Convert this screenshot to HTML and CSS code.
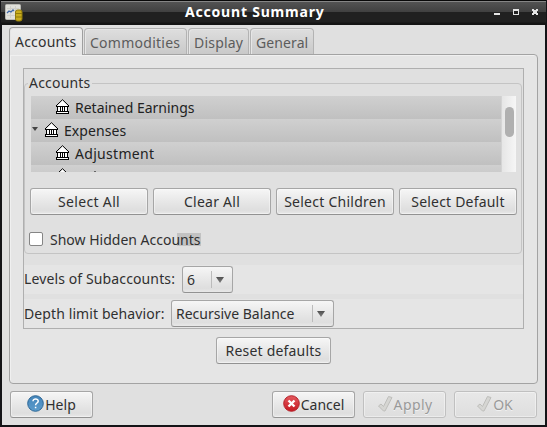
FILE: index.html
```html
<!DOCTYPE html>
<html lang="en">
<head>
<meta charset="utf-8">
<title>Account Summary</title>
<link rel="stylesheet" href="styles.css">
</head>
<body>
<svg class="defs" width="0" height="0">
  <defs>
    <symbol id="bank" viewBox="0 0 13 15">
      <path d="M6.500 1L12 6.500V8H1V6.500Z" fill="#fff"/>
      <path d="M.5 6.500L6.500 .7 12.500 6.500" fill="none" stroke="#000"/>
      <path d="M0 6h1v1h11V6h1v2H0zM1 8h11v4H1zM0 12h13v3H0z" fill="#000" shape-rendering="crispEdges"/>
      <path d="M2 8h2v4H2zM5 8h1v4H5zM7 8h1v4H7zM9 8h2v4H9zM1 13h11v1H1z" fill="#fff" shape-rendering="crispEdges"/>
    </symbol>
    <symbol id="check" viewBox="0 0 16 18">
      <path d="M1.500 11L4 9l2.500 2.500L11.500 1.500 15 2.500 8 16H6.500Z" fill="#d6d6d3" stroke="#bebebb" stroke-linejoin="round"/>
    </symbol>
    <linearGradient id="blue" x2="0" y2="1"><stop stop-color="#4585ba"/><stop offset="1" stop-color="#5b9ccc"/></linearGradient>
    <linearGradient id="red" x2="0" y2="1"><stop stop-color="#e45a5f"/><stop offset="1" stop-color="#c51820"/></linearGradient>
  </defs>
</svg>
<div class="window">
  <header class="titlebar">
    <svg class="app-icon" width="18" height="18" viewBox="0 0 18 18">
      <rect x=".5" y=".5" width="15" height="15" rx="1" fill="#e0e0db" stroke="#b9b9b4"/>
      <path d="M2 4.500h12M2 11.500h12M5.500 2v12M10.500 2v12" stroke="#cfcfca"/>
      <path d="M2 9l2-2 2 1 2-2 1 1" fill="none" stroke="#3f68a8" stroke-width="1.300"/>
      <rect x="10.500" y="6" width="6.500" height="11" rx="2" fill="#c8ac1c" stroke="#8f7a0b"/>
      <path d="M11 9.500h6M11 13h6" stroke="#8f7a0b"/>
    </svg>
    <h1 class="title">Account Summary</h1>
    <svg class="controls" width="45" height="8" viewBox="0 0 45 8" shape-rendering="crispEdges">
      <path d="M0 4h6v2H0zM19 0h6v6h-6zM38 0h2v1h2V0h2v2h-1v2h1v2h-2V5h-2v1h-2V4h1V2h-1z" fill="#e4e4e4"/>
      <path d="M20 2h4v3h-4z" fill="#222"/>
    </svg>
  </header>
  <main class="client">
    <nav class="tabs">
      <span class="tab active">Accounts</span><span class="tab commodities">Commodities</span><span class="tab display">Display</span><span class="tab general">General</span>
    </nav>
    <section class="page">
      <div class="options">
        <fieldset class="group">
          <legend>Accounts</legend>
          <div class="tree">
            <div class="rows">
              <div class="row child"><svg width="13" height="15"><use href="#bank"/></svg><span class="t-retained">Retained Earnings</span></div>
              <div class="row"><i class="expander"></i><svg width="13" height="15"><use href="#bank"/></svg><span class="t-expenses">Expenses</span></div>
              <div class="row child"><svg width="13" height="15"><use href="#bank"/></svg><span class="t-adjust">Adjustment</span></div>
              <div class="row child"><svg width="13" height="15"><use href="#bank"/></svg><i class="stem"></i></div>
            </div>
            <div class="scrollbar"><div class="thumb"></div></div>
          </div>
          <div class="selectors">
            <button class="btn b-all">Select All</button>
            <button class="btn b-clear">Clear All</button>
            <button class="btn b-children">Select Children</button>
            <button class="btn b-default">Select Default</button>
          </div>
          <label class="hidden-option"><i class="checkbox"></i><span class="t-hidden">Show Hidden Accounts</span></label>
        </fieldset>
        <div class="field levels"><span class="t-levels">Levels of Subaccounts:</span><span class="combo c-levels"><span>6</span><i class="arrow"></i></span></div>
        <div class="field depth"><span class="t-depth">Depth limit behavior:</span><span class="combo c-depth"><span>Recursive Balance</span><i class="arrow"></i></span></div>
      </div>
      <button class="btn b-reset">Reset defaults</button>
    </section>
    <footer class="actions">
      <button class="btn b-help"><svg width="17" height="17" viewBox="0 0 17 17"><circle cx="8.500" cy="8.500" r="7.800" fill="url(#blue)" stroke="#2d6796"/><path d="M6 6.300C6 3 11.300 3.200 11.200 6.200 11.100 8.100 8.600 8 8.600 10.300M8.600 11.700v1.600" fill="none" stroke="#fff" stroke-width="1.500"/></svg><span>Help</span></button>
      <button class="btn b-cancel"><svg width="17" height="17" viewBox="0 0 17 17"><circle cx="8.500" cy="8.500" r="7.800" fill="url(#red)" stroke="#b5222a"/><path d="M5.500 5.500l6 6M11.500 5.500l-6 6" stroke="#fff" stroke-width="2.400"/></svg><span>Cancel</span></button>
      <button class="btn b-apply" disabled><svg width="16" height="18"><use href="#check"/></svg><span>Apply</span></button>
      <button class="btn b-ok" disabled><svg width="16" height="18"><use href="#check"/></svg><span>OK</span></button>
    </footer>
  </main>
</div>
</body>
</html>
```
FILE: styles.css
```css
* { box-sizing: border-box; }
body {
  margin: 0;
  font: 14px/20px "Noto Sans", "Open Sans", sans-serif;
  color: #303030;
  overflow: hidden;
}
.defs { position: absolute; }
svg { display: block; flex: none; }
.window {
  width: 547px;
  height: 427px;
  padding: 0 2px 2px;
  background: #141417;
}
.titlebar {
  display: flex;
  height: 25px;
  margin: 0 -1px;
  border-top: 1px solid #080808;
  background: linear-gradient(#858585 0 1px, #535353 1px, #404040 11px, #202020 11px, #202020 21px, #141414 22px);
}
.app-icon { margin: 3px 0 0 4px; }
.title {
  margin: 1px 0 0 162px;
  width: 141px;
  font-size: 14px;
  line-height: 20px;
  font-weight: 700;
  letter-spacing: .8px;
  white-space: nowrap;
  color: #fff;
}
.controls { margin: 8px 0 0 168px; }
.client {
  height: 400px;
  padding: 2px 7px 0;
  background: #e0e0e0;
}
.tabs {
  display: flex;
  align-items: flex-end;
  gap: 1px;
  height: 28px;
  position: relative;
  margin-bottom: -1px;
}
.tab {
  height: 26px;
  margin-bottom: 1px;
  padding: 4px 0 0 5px;
  border: 1px solid #b3b3b3;
  border-bottom: 0;
  border-radius: 4px 4px 0 0;
  background: linear-gradient(#dedede, #c9c9c9);
  box-shadow: inset 1px 1px #e6e6e6;
  color: #5c5c5c;
  white-space: nowrap;
}
.tab.active {
  width: 74px;
  height: 28px;
  margin-bottom: 0;
  border-color: #9f9f9f;
  background: linear-gradient(#ededed, #e5e5e5);
  color: #303030;
  letter-spacing: .2px;
}
.commodities { width: 103px; letter-spacing: .26px; }
.display { width: 61px; letter-spacing: .2px; }
.general { width: 64px; letter-spacing: .1px; }
.page {
  height: 330px;
  width: 529px;
  padding: 13px 13px 0;
  border: 1px solid #a3a3a3;
  border-radius: 0 4px 4px 4px;
  background: #e5e5e5;
  box-shadow: inset 1px 1px #f0f0f0;
}
.options {
  height: 261px;
  width: 501px;
  border: 1px solid #afafaf;
  background: #e0e0e0;
}
.group {
  position: relative;
  height: 171px;
  margin: 14px 1px 0 0;
  padding: 12px 0 0 6px;
  border: 1px solid #c4c4c4;
  border-radius: 4px;
  min-width: 0;
}
.group legend {
  position: absolute;
  top: -11px;
  left: 3px;
  padding: 0 1px;
  background: #e0e0e0;
  letter-spacing: .2px;
}
.tree { display: flex; width: 485px; height: 76px; }
.rows { width: 470px; overflow: hidden; color: #222; }
.row {
  display: flex;
  align-items: center;
  height: 23px;
  padding-left: 14px;
  background: linear-gradient(#d0d0d0, #c0c0c0);
  gap: 5px;
}
.row svg { margin-top: -2px; }
.row.child { padding-left: 25px; gap: 6px; }
.expander {
  width: 6px;
  height: 4px;
  margin: -3px 3px 0 -13px;
  background: #444;
  clip-path: polygon(0 0, 100% 0, 50% 100%);
}
.stem { align-self: flex-start; width: 2px; height: 1px; margin: 6px 0 0 19px; background: #666; }
.row .t-expenses { margin-left: 1px; letter-spacing: .08px; }
.expander + svg { margin-left: -1px; }
.t-adjust { letter-spacing: .3px; }
.scrollbar {
  width: 15px;
  padding: 11px 3px 0;
  border-left: 1px solid #d4d4d4;
  background: linear-gradient(90deg, #e6e6e6, #f6f6f6);
}
.thumb { width: 9px; height: 30px; border-radius: 5px; background: #b0b0b0; }
.selectors { display: flex; gap: 5px; margin: 16px 0 0 -1px; }
.btn {
  display: flex;
  justify-content: center;
  align-items: center;
  width: 118px;
  height: 27px;
  padding: 0;
  border: 1px solid #a6a6a6;
  border-bottom-color: #929292;
  border-radius: 3px;
  background: linear-gradient(#f6f6f6, #eaeaea 40%, #dedede 85%, #e8e8e8);
  box-shadow: inset 0 0 0 1px rgba(255, 255, 255, .4);
  color: #303030;
  font: inherit;
  white-space: nowrap;
}
.b-all { letter-spacing: .35px; }
.b-clear { letter-spacing: .26px; }
.b-children { letter-spacing: .25px; }
.b-default { letter-spacing: .2px; }
.hidden-option {
  display: flex;
  align-items: center;
  height: 20px;
  margin: 15px 0 0 -2px;
  gap: 7px;
}
.checkbox {
  width: 14px;
  height: 14px;
  margin-top: -2px;
  border: 1px solid #858585;
  border-radius: 2px;
  background: #fff;
}
.t-hidden {
  width: 151px;
  white-space: nowrap;
  background: linear-gradient(#c2c2c2, #c2c2c2) right 3px / 24px 13px no-repeat;
}
.field { display: flex; background: #e5e5e5; white-space: nowrap; }
.levels { height: 29px; margin-top: 11px; }
.depth { height: 29px; margin-top: 5px; padding-top: 1px; }
.field > span:first-child { margin-top: 4px; }
.t-levels { width: 158px; letter-spacing: .12px; }
.t-depth { width: 147px; letter-spacing: .1px; }
.combo {
  display: flex;
  justify-content: space-between;
  height: 27px;
  padding: 3px 0 0 4px;
  border: 1px solid #a6a6a6;
  border-bottom-color: #929292;
  border-radius: 3px;
  background: linear-gradient(#f6f6f6, #eaeaea 40%, #dedede 85%, #e8e8e8);
}
.c-levels { width: 51px; margin-top: 1px; }
.c-depth { width: 163px; }
.arrow {
  width: 21px;
  height: 17px;
  margin-top: 1px;
  border-left: 1px solid #bbb;
  display: flex;
  padding: 6px 0 0 4px;
}
.arrow::before {
  content: "";
  width: 8px;
  height: 6px;
  background: linear-gradient(#505050, #808080);
  clip-path: polygon(0 0, 100% 0, 50% 100%);
}
.b-reset { width: 115px; margin: 8px 0 0 193px; letter-spacing: .2px; }
.actions { display: flex; gap: 8px; margin: 7px 0 0 1px; }
.actions .btn { width: 83px; gap: 1px; }
.actions svg { margin-top: -2px; }
.b-help { margin-right: 171px; }
.actions .b-apply { gap: 1px; letter-spacing: .4px; }
.actions .b-ok { gap: 1px; padding-right: 2px; }
.btn:disabled {
  border-color: #c0c0c0;
  background: linear-gradient(#e8e8e8, #dedede);
  color: #999;
  text-shadow: 0 1px #f2f2f2;
}
```
